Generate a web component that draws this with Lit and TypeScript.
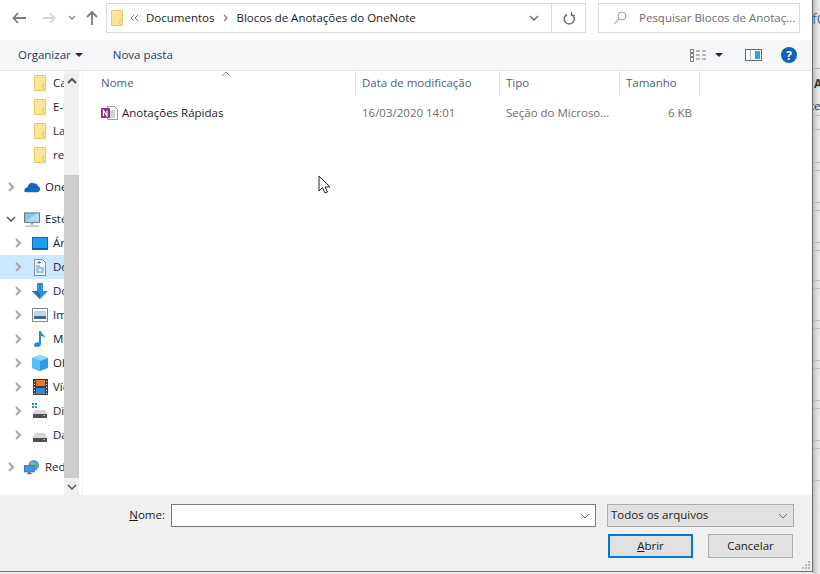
import { LitElement, html, css, svg } from "lit";
import { customElement } from "lit/decorators.js";

const folder = html`<svg width="16" height="16" viewBox="0 0 16 16"><path d="M2.500.5h11v15h-11z" fill="#fde69a" stroke="#ecc660"/><path d="M11 15.500V9.500h2.500" fill="none" stroke="#ecc660"/></svg>`;

const icons: Record<string, unknown> = {
  folder,
  cloud: html`<svg width="17" height="14" viewBox="0 0 17 14"><path d="M.8 12.500C-.4 10 1 7.600 3.600 7.600 4.300 3.500 8 1 11 3.200c2-.3 3.600 1 3.800 3 1.500.3 2.400 1.500 2.200 3 0 2-1.200 3.300-2.800 3.300H2.500c-.7 0-1.300-.2-1.700 0z" fill="#0f6cc4"/><path d="M4 7.600C6 5 10 5.500 11 8c2-1.500 3.500-1.800 3.800-1.800" fill="none" stroke="#0a5ba8"/></svg>`,
  pc: html`<svg width="17" height="15" viewBox="0 0 17 15"><rect x=".5" y=".5" width="16" height="10" fill="#7cc4f2" stroke="#66737e"/><path d="M2 10 13 1h3v9z" fill="#a9dcf8"/><path d="M7 11h3v2H7z" fill="#9a9a9a"/><path d="M1 14.500h15" stroke="#9a9a9a"/></svg>`,
  desktop: html`<svg width="16" height="13" viewBox="0 0 16 13"><rect x=".5" y=".5" width="15" height="11" fill="#1e9ef0" stroke="#0b69b5"/><path d="M0 11h16v2H0z" fill="#0b5fa5"/></svg>`,
  doc: html`<svg width="12" height="17" viewBox="0 0 12 17"><path d="M.5.500h8l3 3v13H.5z" fill="#f4f6f8" stroke="#7f8b96"/><path d="M2 7h4M2 9h8M2 11h3M7 11h3M2 13h8" stroke="#4a9ad8"/><path d="M5 2v3M3.500 3.500H7" stroke="#2d7cc0"/></svg>`,
  down: html`<svg width="16" height="16" viewBox="0 0 16 16"><path d="M5 0h6v8h5l-8 8-8-8h5z" fill="#2f8fdf"/><path d="M8 16 0 8h5l3 3z" fill="#1f73bd"/></svg>`,
  pic: html`<svg width="16" height="14" viewBox="0 0 16 14"><rect x=".5" y=".5" width="15" height="13" fill="#fff" stroke="#7d8a96"/><rect x="2" y="3" width="12" height="5" fill="#bcd8ec"/><rect x="2" y="8" width="12" height="3" fill="#3d6d8c"/></svg>`,
  music: html`<svg width="12" height="16" viewBox="0 0 12 16"><path d="M5 0h2c0 3 4 3.500 4 7-1-1.500-2.500-2-4-2v8c0 2-2 3-4 3s-3-1-3-2c0-2 3-3 5-2.500z" fill="#1e8fe6"/></svg>`,
  cube: html`<svg width="16" height="16" viewBox="0 0 16 16"><path d="M8 0l8 3v10l-8 3-8-3V3z" fill="#2a9be8"/><path d="M0 3l8 3 8-3-8-3z" fill="#8fd6fb"/><path d="M0 3l8 3v10l-8-3z" fill="#56bdf5"/></svg>`,
  film: html`<svg width="15" height="16" viewBox="0 0 15 16"><rect width="15" height="16" fill="#3d3d3d"/><path d="M1 2h1v1H1zM1 5h1v1H1zM1 8h1v1H1zM1 11h1v1H1zM1 14h1v1H1zM13 2h1v1h-1zM13 5h1v1h-1zM13 8h1v1h-1zM13 11h1v1h-1zM13 14h1v1h-1z" fill="#eee"/><rect x="3" y="1" width="9" height="6" fill="#e47b2c"/><rect x="3" y="9" width="9" height="6" fill="#3b86c8"/></svg>`,
  disk1: html`<svg width="16" height="16" viewBox="0 0 16 16"><path d="M0 0h2v2H0zM3 0h2v2H3zM0 3h2v2H0zM3 3h2v2H3z" fill="#1e8fe6"/><path d="M3 7h10l2 4H1z" fill="#d4d6d8"/><rect x="1" y="11" width="14" height="4" fill="#4c4f53"/><rect x="11" y="12" width="2" height="1" fill="#aaa"/></svg>`,
  disk: html`<svg width="16" height="16" viewBox="0 0 16 16"><path d="M3 6h10l2 5H1z" fill="#d4d6d8"/><rect x="1" y="11" width="14" height="4" fill="#4c4f53"/><rect x="11" y="12" width="2" height="1" fill="#aaa"/></svg>`,
  net: html`<svg width="18" height="16" viewBox="0 0 18 16"><circle cx="11" cy="6" r="6" fill="#5b9bd8"/><path d="M8 2l5 2-2 4-4-2z" fill="#7cc36a"/><rect x=".5" y="6.500" width="11" height="7" fill="#3d9be6" stroke="#2a6ea8"/><path d="M5 14h2v1.500H5zM3 15.500h6" stroke="#777"/></svg>`,
};

type TreeRow = { icon: string; text: string; indent: number; arrow?: string; gap?: boolean; sel?: boolean };

const rows: TreeRow[] = [
  { icon: "folder", text: "Capturas", indent: 32 },
  { icon: "folder", text: "E-books", indent: 32 },
  { icon: "folder", text: "Layouts", indent: 32 },
  { icon: "folder", text: "resumos", indent: 32 },
  { icon: "cloud", text: "OneDrive", indent: 24, arrow: "r", gap: true },
  { icon: "pc", text: "Este Computador", indent: 24, arrow: "d", gap: true },
  { icon: "desktop", text: "Área de Trabalho", indent: 32, arrow: "r" },
  { icon: "doc", text: "Documentos", indent: 32, arrow: "r", sel: true },
  { icon: "down", text: "Downloads", indent: 32, arrow: "r" },
  { icon: "pic", text: "Imagens", indent: 32, arrow: "r" },
  { icon: "music", text: "Música", indent: 32, arrow: "r" },
  { icon: "cube", text: "Objetos 3D", indent: 32, arrow: "r" },
  { icon: "film", text: "Vídeos", indent: 32, arrow: "r" },
  { icon: "disk1", text: "Disco Local (C:)", indent: 32, arrow: "r" },
  { icon: "disk", text: "Dados (D:)", indent: 32, arrow: "r" },
  { icon: "net", text: "Rede", indent: 24, arrow: "r", gap: true },
];

// spacing of the rules in the window behind the dialog
const behindLines = [14, 33, 8, 32, 8, 32, 8, 30, 8, 32, 8, 32, 8, 32, 8, 32, 8, 32, 8];

const chev = (d: string, c: string, w = 1.500) =>
  html`<svg width="10" height="10" viewBox="0 0 10 10"><path d=${d} fill="none" stroke=${c} stroke-width=${w}/></svg>`;
const chevDown = (c: string) => chev("M1 3l4 4 4-4", c);
const chevRight = (c: string) => chev("M3 1l4 4-4 4", c, 2);

@customElement("app-root")
export class AppRoot extends LitElement {
  static styles = css`
    :host {
      display: flex;
      position: relative;
      width: 820px;
      height: 574px;
      overflow: hidden;
      font-family: "Open Sans", "Noto Sans", sans-serif;
      font-size: 11.5px;
      color: #1a1a1a;
      background: #ececec;
    }
    .dialog {
      width: 813px;
      height: 572px;
      display: flex;
      flex-direction: column;
      background: #fff;
      border-right: 1px solid #6d6d6d;
      border-bottom: 1px solid #6d6d6d;
      box-sizing: border-box;
      flex: none;
    }
    .side {
      flex: 1;
      background: linear-gradient(to right, #bdbdbd, #d8d8d8 45%, #ececec);
      overflow: hidden;
      color: #333;
      white-space: nowrap;
    }
    .side .f { height: 69px; padding-top: 9px; box-sizing: border-box; margin-left: -1px; color: #4a6f94; font-size: 14px; border-bottom: 1px solid #b5b5b5; }
    .side .a { margin-top: 7px; font-weight: 700; height: 22px; padding-left: 1px; }
    .side .e { margin-left: -3px; height: 17px; }
    .side i { display: block; border-top: 1px solid #bcbcbc; }
    /* Open Sans sits a pixel lower than the reference's face */
    .tx, .crumbs span, .barl span, .nova, .search span, .n span, .d, .y, .s, .lab, .combo span, .bt span, .colt {
      margin-bottom: 2px;
    }
    .nav {
      height: 40px;
      flex: none;
      display: flex;
      align-items: flex-start;
      padding-top: 3px;
      box-sizing: border-box;
      background: #fff;
    }
    .navbtns {
      width: 106px;
      height: 30px;
      display: flex;
      align-items: center;
      flex: none;
      padding-left: 12px;
      box-sizing: border-box;
    }
    .navbtns svg { flex: none; }
    .addr {
      width: 480px;
      height: 30px;
      border: 1px solid #d9d9d9;
      box-sizing: border-box;
      display: flex;
      align-items: center;
      flex: none;
    }
    .addr .ic { margin-left: 2px; display: flex; }
    .crumbs { flex: 1; display: flex; align-items: center; color: #1a1a1a; white-space: nowrap; }
    .addr .btn {
      width: 33px;
      height: 28px;
      display: flex;
      align-items: center;
      justify-content: center;
      flex: none;
      border-left: 1px solid #d9d9d9;
    }
    .addr .dd { border-left: none; width: 34px; }
    .search {
      margin-left: 12px;
      width: 202px;
      height: 30px;
      border: 1px solid #d9d9d9;
      box-sizing: border-box;
      display: flex;
      align-items: center;
      color: #6d6d6d;
      white-space: nowrap;
      padding-left: 14px;
      gap: 12px;
    }
    .bar {
      height: 31px;
      flex: none;
      background: #f5f6f7;
      border-bottom: 1px solid #e5e5e5;
      box-sizing: border-box;
      display: flex;
      align-items: center;
      color: #1e395b;
      padding-left: 18px;
    }
    .caret { width: 0; height: 0; border: 4px solid transparent; border-top: 4px solid #2b2b40; border-bottom: 0; }
    .barl { display: flex; align-items: center; gap: 4px; }
    .nova { margin-left: 30px; }
    .barr { margin-left: auto; display: flex; align-items: center; padding-right: 15px; }
    .main { flex: 1; display: flex; min-height: 0; }
    .tree { width: 64px; overflow: hidden; flex: none; white-space: nowrap; color: #1a1a2a; }
    .row { height: 24px; display: flex; align-items: center; position: relative; }
    .row.gap { margin-top: 8px; }
    .row.sel { background: #cce8ff; }
    .row .ar { position: absolute; top: 7px; display: flex; }
    .row .ico { width: 16px; display: flex; justify-content: center; flex: none; }
    .row .tx { margin-left: 5px; }
    .scroll {
      width: 15px;
      flex: none;
      background: #f0f0f0;
      display: flex;
      flex-direction: column;
    }
    .scroll .b { height: 17px; display: flex; align-items: center; justify-content: center; flex: none; }
    .scroll .t1 { height: 86px; flex: none; }
    .scroll .thumb { flex: 1; background: #cdcdcd; }
    .list { flex: 1; margin-left: 3px; border-left: 1px solid #f0f0f0; position: relative; }
    .head { display: flex; height: 26px; color: #4c607a; position: relative; }
    .col { box-sizing: border-box; border-right: 1px solid #e5e5e5; padding-left: 6px; display: flex; align-items: center; height: 25px; flex: none; }
    .c1 { width: 273px; padding-left: 18px; }
    .c2 { width: 144px; }
    .c3 { width: 120px; }
    .c4 { width: 80px; }
    .sort { position: absolute; left: 138px; top: 0; }
    .file { display: flex; height: 22px; align-items: center; margin-top: 5px; color: #6d6d6d; }
    .file .n { width: 273px; box-sizing: border-box; padding-left: 18px; display: flex; align-items: center; gap: 4px; color: #1a1a2a; flex: none; }
    .file .d { width: 144px; box-sizing: border-box; padding-left: 6px; flex: none; }
    .file .y { width: 120px; box-sizing: border-box; padding-left: 6px; flex: none; white-space: nowrap; }
    .file .s { width: 72px; text-align: right; flex: none; }
    .foot {
      height: 76px;
      flex: none;
      background: #f0f0f0;
      position: relative;
      display: grid;
      grid-template-columns: 171px 425px 198px;
      grid-template-rows: 23px 24px;
      row-gap: 7px;
      padding-top: 9px;
      box-sizing: border-box;
      color: #1a1a1a;
    }
    .lab { justify-self: end; align-self: center; padding-right: 6px; }
    u { text-decoration: underline; }
    .inp {
      background: #fff;
      border: 1px solid #7a7a7a;
      box-sizing: border-box;
      display: flex;
      align-items: center;
      justify-content: flex-end;
      padding-right: 5px;
    }
    .combo {
      margin-left: 11px;
      background: #e1e1e1;
      border: 1px solid #adadad;
      box-sizing: border-box;
      display: flex;
      align-items: center;
      justify-content: space-between;
      padding: 0 5px 0 3px;
    }
    .btns {
      grid-column: 2 / 4;
      justify-self: end;
      display: flex;
      gap: 15px;
      margin-right: 1px;
    }
    .bt {
      width: 85px;
      height: 24px;
      background: #e1e1e1;
      border: 1px solid #adadad;
      box-sizing: border-box;
      display: flex;
      align-items: center;
      justify-content: center;
      flex: none;
    }
    .bt.def { border: 2px solid #0078d7; }
    .grip { position: absolute; right: 1px; bottom: 1px; }
    .cursor { position: absolute; left: 318px; top: 175px; }
  `;

  private renderRow(r: TreeRow) {
    return html`<div class="row ${r.gap ? "gap" : ""} ${r.sel ? "sel" : ""}" style="padding-left:${r.indent}px">
      ${r.arrow
        ? html`<span class="ar" style="left:${r.indent === 24 ? 6 : 13}px">${r.arrow === "d" ? chevDown("#555") : chevRight("#a6a6a6")}</span>`
        : ""}
      <span class="ico">${icons[r.icon]}</span><span class="tx">${r.text}</span>
    </div>`;
  }

  render() {
    return html`
      <div class="dialog">
        <div class="nav">
          <div class="navbtns">
            <svg width="14" height="12" viewBox="0 0 14 12"><path d="M6 1 1.500 6 6 11M2 6h12" fill="none" stroke="#7a7a7a" stroke-width="1.800"/></svg>
            <svg style="margin-left:17px" width="13" height="12" viewBox="0 0 13 12"><path d="M7 1l4.500 5L7 11M11 6H0" fill="none" stroke="#d6d6d6" stroke-width="1.800"/></svg>
            <svg style="margin-left:12px" width="8" height="6" viewBox="0 0 8 6"><path d="M1 1l3 3 3-3" fill="none" stroke="#8f8f8f" stroke-width="1.500"/></svg>
            <svg style="margin-left:10px" width="12" height="14" viewBox="0 0 12 14"><path d="M1 6l5-5 5 5M6 1v13" fill="none" stroke="#7a7a7a" stroke-width="1.800"/></svg>
          </div>
          <div class="addr">
            <span class="ic">${folder}</span>
            <div class="crumbs">
              <svg style="margin-left:5px" width="9" height="8" viewBox="0 0 9 8"><path d="M4 1 1 4l3 3M8 1 5 4l3 3" fill="none" stroke="#777"/></svg>
              <span style="margin-left:7px">Documentos</span>
              <svg style="margin-left:9px" width="6" height="8" viewBox="0 0 6 8"><path d="M1 1l3 3-3 3" fill="none" stroke="#777" stroke-width="1.200"/></svg>
              <span style="margin-left:7px">Blocos de Anotações do OneNote</span>
            </div>
            <div class="btn dd">${chevDown("#6d6d6d")}</div>
            <div class="btn">
              <svg width="12" height="13" viewBox="0 0 12 13"><path d="M4 2.500a5 5 0 1 0 4.500 0" fill="none" stroke="#6d6d6d" stroke-width="1.500"/><path d="M8.500 0v3.500H12" fill="none" stroke="#6d6d6d" stroke-width="1.200"/></svg>
            </div>
          </div>
          <div class="search">
            <svg width="14" height="14" viewBox="0 0 14 14"><circle cx="9" cy="5" r="4" fill="none" stroke="#9a9a9a"/><path d="M6 8 1 13" stroke="#c9b88a" stroke-width="1.500"/></svg>
            <span>Pesquisar Blocos de Anotaç...</span>
          </div>
        </div>
        <div class="bar">
          <div class="barl"><span>Organizar</span><i class="caret"></i></div>
          <span class="nova">Nova pasta</span>
          <div class="barr">
            <svg width="17" height="13" viewBox="0 0 17 13"><path d="M.5.500h3v3h-3zM.5 4.500h3v3h-3zM.5 8.500h3v4h-3z" fill="#fff" stroke="#777"/><path d="M6 2h4M12 2h4M6 6h4M12 6h4M6 10h4M12 10h4" stroke="#777"/></svg>
            <i class="caret" style="margin-left:8px"></i>
            <svg style="margin-left:22px" width="17" height="12" viewBox="0 0 17 12"><rect x=".5" y=".5" width="16" height="11" fill="#fff" stroke="#5d6b80"/><rect x="10" y="2" width="5" height="8" fill="#3d9be6"/><path d="M5.500 1v10" stroke="#a8b0bc"/></svg>
            <svg style="margin-left:19px" width="16" height="16" viewBox="0 0 16 16"><circle cx="8" cy="8" r="8" fill="#0f62ba"/><text x="8" y="12.500" font-size="12" font-weight="700" font-family="Open Sans, sans-serif" text-anchor="middle" fill="#fff">?</text></svg>
          </div>
        </div>
        <div class="main">
          <div class="tree">${rows.map((r) => this.renderRow(r))}</div>
          <div class="scroll">
            <div class="b" style="margin-top:1px">${chev("M1 7l4-4 4 4", "#555", 2)}</div>
            <div class="t1"></div>
            <div class="thumb"></div>
            <div class="b">${chevDown("#555")}</div>
          </div>
          <div class="list">
            <div class="head">
              <div class="col c1"><span class="colt">Nome</span></div>
              <div class="col c2"><span class="colt">Data de modificação</span></div>
              <div class="col c3"><span class="colt">Tipo</span></div>
              <div class="col c4"><span class="colt">Tamanho</span></div>
              <svg class="sort" width="10" height="6" viewBox="0 0 10 6"><path d="M1 5l4-4 4 4" fill="none" stroke="#8a8a8a"/></svg>
            </div>
            <div class="file">
              <div class="n">
                <svg width="17" height="16" viewBox="0 0 17 16"><path d="M6.500 1.500h7l3 3v10h-10z" fill="#fff" stroke="#9a9a9a"/><path d="M9 6h5M9 8h5M9 10h5M9 12h5" stroke="#a6a6a6"/><rect y="3" width="9" height="10" fill="#80397b"/><path d="M2.500 11V5.500L6 11V5.500" fill="none" stroke="#fff" stroke-width="1.200"/></svg>
                <span>Anotações Rápidas</span>
              </div>
              <div class="d">16/03/2020 14:01</div>
              <div class="y">Seção do Microso...</div>
              <div class="s">6 KB</div>
            </div>
          </div>
        </div>
        <div class="foot">
          <div class="lab"><u>N</u>ome:</div>
          <div class="inp">${chev("M1 3l4 4 4-4", "#6d6d6d", 1)}</div>
          <div class="combo"><span>Todos os arquivos</span>${chev("M1 3l4 4 4-4", "#6d6d6d", 1)}</div>
          <div class="btns">
            <div class="bt def"><span><u>A</u>brir</span></div>
            <div class="bt"><span>Cancelar</span></div>
          </div>
          <svg class="grip" width="10" height="10" viewBox="0 0 10 10">
            ${[[7, 1], [4, 4], [7, 4], [1, 7], [4, 7], [7, 7]].map(
              ([x, y]) => svg`<rect x=${x} y=${y} width="2" height="2" fill="#b8b8b8"/>`
            )}
          </svg>
        </div>
      </div>
      <div class="side">
        <div class="f">fC</div>
        <div class="a">A</div>
        <div class="e">te</div>
        ${behindLines.map((h) => html`<i style="height:${h - 1}px"></i>`)}
      </div>
      <svg class="cursor" width="14" height="20" viewBox="0 0 14 20"><path d="M1 1v15l3.500-3.500L7 18l2.500-1-2.500-5h5z" fill="#fff" stroke="#222"/></svg>
    `;
  }
}
